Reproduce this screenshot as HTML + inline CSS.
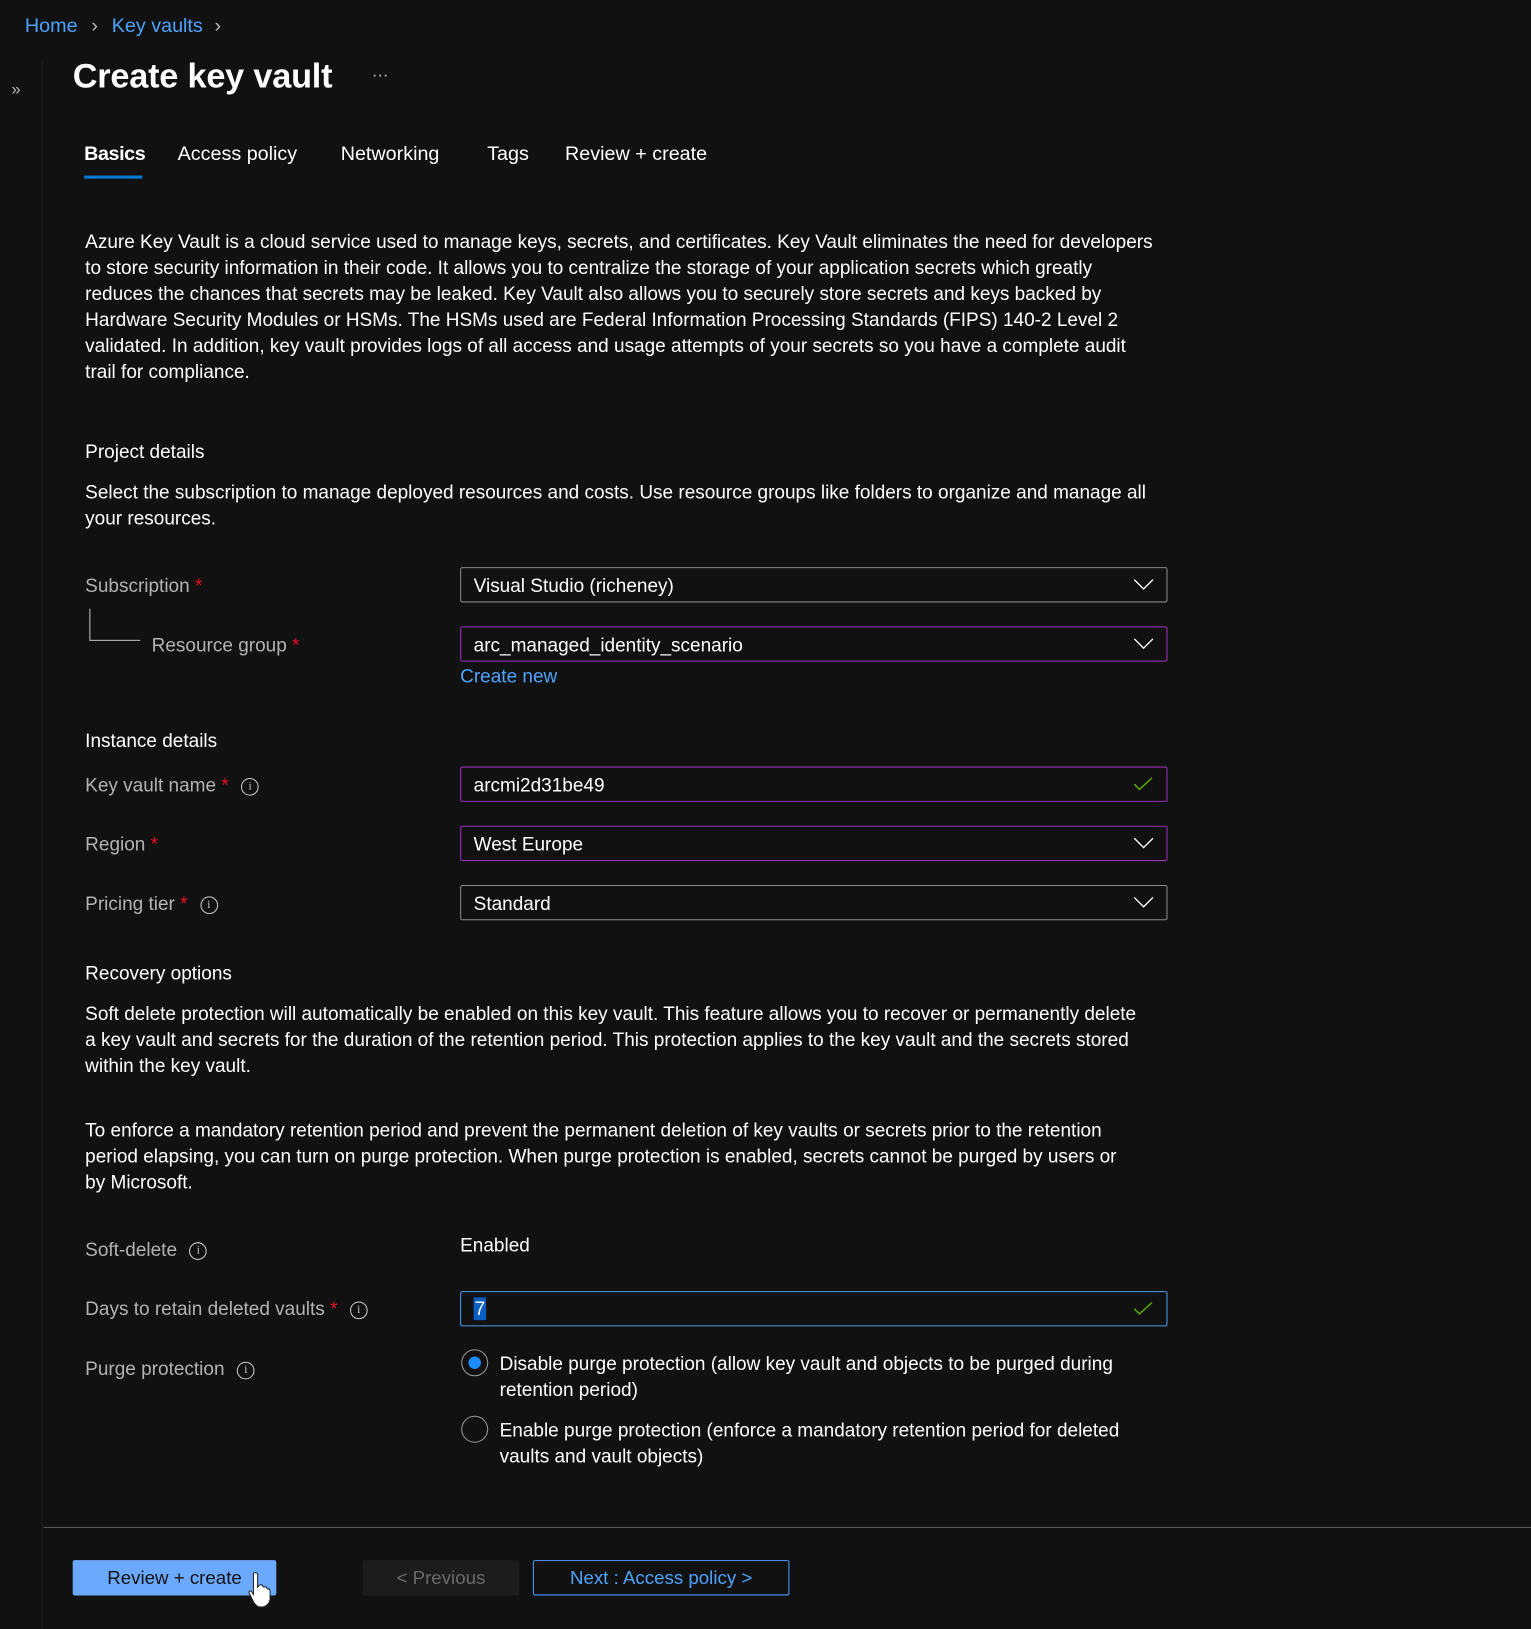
<!DOCTYPE html>
<html><head><meta charset="utf-8"><style>
html,body{margin:0;padding:0;background:#111111;width:1531px;height:1629px;overflow:hidden}
#w{position:absolute;left:0;top:0;width:1474px;height:1568px;transform:scale(1.0387);transform-origin:0 0;font-family:"Liberation Sans",sans-serif;color:#fff}
.a{position:absolute;white-space:nowrap}
.t{font-size:18.3px;line-height:25px;color:#fff}
.lbl{font-size:18.3px;color:#b3b3b3}
.req{color:#e81123}
.box{position:absolute;left:443px;width:681px;height:34px;border:1px solid #8a8886;border-radius:2px;box-sizing:border-box}
.box span{position:absolute;left:12px;top:6px;font-size:18.3px;color:#fff}
.pur{border-color:#9b30b8}
.chev{position:absolute;right:12px;top:10px}
.info{display:inline-block;width:15px;height:15px;border:1px solid #ccc;border-radius:50%;font-size:11px;line-height:15px;text-align:center;color:#ccc;vertical-align:middle;margin-left:12px;font-family:"Liberation Serif",serif}
</style></head><body><div id="w">
<div class="a" style="left:40px;top:58px;width:1px;height:1510px;background:#1d1d1d"></div>
<div class="a" style="left:24px;top:15px;font-size:19px;color:#4da3ff">Home <span style="color:#bbb;margin:0 8px">›</span> Key vaults <span style="color:#bbb;margin-left:6px">›</span></div>
<div class="a" style="left:11px;top:78px;font-size:16px;color:#bbb">»</div>
<div class="a" style="left:70px;top:54px;font-size:33px;font-weight:bold;color:#fff;letter-spacing:-0.2px">Create key vault</div>
<div class="a" style="left:358px;top:64px;font-size:16px;color:#ccc">···</div>
<div class="a" style="left:81px;top:138px;font-size:19px;color:#fff;font-weight:bold;letter-spacing:-0.4px">Basics</div>
<div class="a" style="left:81px;top:169px;width:56px;height:3px;background:#0078d4"></div>
<div class="a" style="left:171px;top:138px;font-size:19px">Access policy</div>
<div class="a" style="left:328px;top:138px;font-size:19px">Networking</div>
<div class="a" style="left:469px;top:138px;font-size:19px">Tags</div>
<div class="a" style="left:544px;top:138px;font-size:19px">Review + create</div>

<div class="a t" style="left:82px;top:220px">Azure Key Vault is a cloud service used to manage keys, secrets, and certificates. Key Vault eliminates the need for developers<br>to store security information in their code. It allows you to centralize the storage of your application secrets which greatly<br>reduces the chances that secrets may be leaked. Key Vault also allows you to securely store secrets and keys backed by<br>Hardware Security Modules or HSMs. The HSMs used are Federal Information Processing Standards (FIPS) 140-2 Level 2<br>validated. In addition, key vault provides logs of all access and usage attempts of your secrets so you have a complete audit<br>trail for compliance.</div>

<div class="a t" style="left:82px;top:422px">Project details</div>
<div class="a t" style="left:82px;top:461px">Select the subscription to manage deployed resources and costs. Use resource groups like folders to organize and manage all<br>your resources.</div>

<div class="a lbl" style="left:82px;top:553px">Subscription <span class="req">*</span></div>
<div class="a" style="left:86px;top:586px;width:48px;height:30px;border-left:1px solid #bbb;border-bottom:1px solid #bbb"></div>
<div class="a lbl" style="left:146px;top:610px">Resource group <span class="req">*</span></div>
<div class="box" style="top:546px"><span>Visual Studio (richeney)</span><svg class="chev" width="20" height="12"><path d="M1 1L10 10L19 1" stroke="#fff" fill="none" stroke-width="1.3"/></svg></div>
<div class="box pur" style="top:603px"><span>arc_managed_identity_scenario</span><svg class="chev" width="20" height="12"><path d="M1 1L10 10L19 1" stroke="#fff" fill="none" stroke-width="1.3"/></svg></div>
<div class="a" style="left:443px;top:640px;font-size:18.3px;color:#4da3ff">Create new</div>

<div class="a t" style="left:82px;top:700px">Instance details</div>
<div class="a lbl" style="left:82px;top:745px">Key vault name <span class="req">*</span><span class="info">i</span></div>
<div class="box pur" style="top:738px"><span>arcmi2d31be49</span><svg class="chev" width="20" height="14" style="top:9px"><path d="M1 7L6 12L18 1" stroke="#57a300" fill="none" stroke-width="1.5"/></svg></div>
<div class="a lbl" style="left:82px;top:802px">Region <span class="req">*</span></div>
<div class="box pur" style="top:795px"><span>West Europe</span><svg class="chev" width="20" height="12"><path d="M1 1L10 10L19 1" stroke="#fff" fill="none" stroke-width="1.3"/></svg></div>
<div class="a lbl" style="left:82px;top:859px">Pricing tier <span class="req">*</span><span class="info">i</span></div>
<div class="box" style="top:852px"><span>Standard</span><svg class="chev" width="20" height="12"><path d="M1 1L10 10L19 1" stroke="#fff" fill="none" stroke-width="1.3"/></svg></div>

<div class="a t" style="left:82px;top:924px">Recovery options</div>
<div class="a t" style="left:82px;top:963px">Soft delete protection will automatically be enabled on this key vault. This feature allows you to recover or permanently delete<br>a key vault and secrets for the duration of the retention period. This protection applies to the key vault and the secrets stored<br>within the key vault.</div>
<div class="a t" style="left:82px;top:1075px">To enforce a mandatory retention period and prevent the permanent deletion of key vaults or secrets prior to the retention<br>period elapsing, you can turn on purge protection. When purge protection is enabled, secrets cannot be purged by users or<br>by Microsoft.</div>

<div class="a lbl" style="left:82px;top:1192px">Soft-delete<span class="info">i</span></div>
<div class="a t" style="left:443px;top:1186px">Enabled</div>
<div class="a lbl" style="left:82px;top:1249px">Days to retain deleted vaults <span class="req">*</span><span class="info">i</span></div>
<div class="box" style="top:1243px;border-color:#4ba0e8"><span style="left:12px;top:5px;background:#0a5fc4;padding:0 1px">7</span><svg class="chev" width="20" height="14" style="top:9px"><path d="M1 7L6 12L18 1" stroke="#57a300" fill="none" stroke-width="1.5"/></svg></div>
<div class="a lbl" style="left:82px;top:1307px">Purge protection<span class="info">i</span></div>
<div class="a" style="left:444px;top:1299px;width:26px;height:26px;border:1px solid #999;border-radius:50%;box-sizing:border-box"><div style="position:absolute;left:6px;top:6px;width:12px;height:12px;border-radius:50%;background:#1a8cff"></div></div>
<div class="a t" style="left:481px;top:1300px">Disable purge protection (allow key vault and objects to be purged during<br>retention period)</div>
<div class="a" style="left:444px;top:1363px;width:26px;height:26px;border:1px solid #999;border-radius:50%;box-sizing:border-box"></div>
<div class="a t" style="left:481px;top:1364px">Enable purge protection (enforce a mandatory retention period for deleted<br>vaults and vault objects)</div>

<div class="a" style="left:42px;top:1470px;width:1432px;height:1px;background:#5a5a5a"></div>
<div class="a" style="left:70px;top:1502px;width:196px;height:34px;background:#6ba9ff;border-radius:2px;color:#111;font-size:18px;line-height:34px;text-align:center">Review + create</div>
<div class="a" style="left:349px;top:1502px;width:151px;height:34px;background:#1c1c1c;border-radius:2px;color:#6a6a6a;font-size:18px;line-height:34px;text-align:center">&lt; Previous</div>
<div class="a" style="left:513px;top:1502px;width:247px;height:34px;border:1px solid #4a9bff;box-sizing:border-box;border-radius:2px;color:#4da3ff;font-size:18px;line-height:32px;text-align:center">Next : Access policy &gt;</div>
<svg class="a" style="left:238px;top:1512px" width="24" height="38"><path d="M6 3 Q8 1 10 3 L10 16 L12 14 Q14 13 15 15 L16 16 Q18 15 19 17 L20 18 Q22 17 22 20 L22 28 Q21 33 16 35 L11 35 Q7 33 5 28 L2 22 Q1 19 4 20 L6 23 Z" fill="#fff" stroke="#222" stroke-width="1"/></svg>
</div></body></html>
